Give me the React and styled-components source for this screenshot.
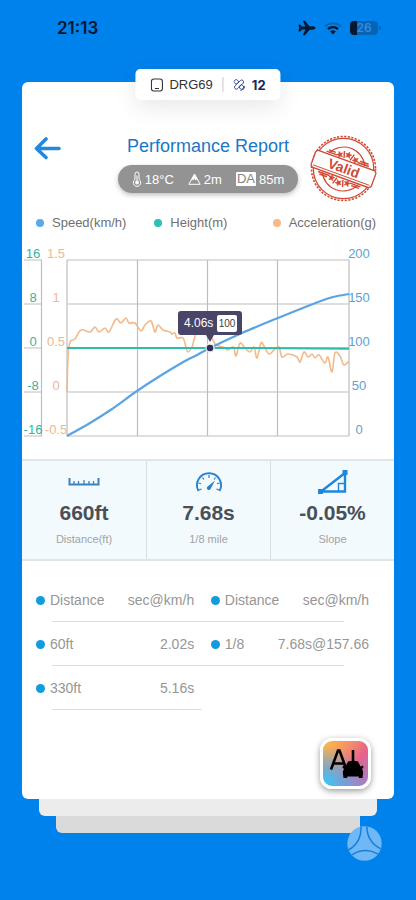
import React from 'react'
import styled, { createGlobalStyle } from 'styled-components';
import { IoAirplane } from 'react-icons/io5'

const GlobalStyle = createGlobalStyle`
    * {
        box-sizing: border-box;
    }
    body {
        margin: 0;
        background: #0082ed;
        font-family: "Liberation Sans", Arial, sans-serif;
    }
    button {
        border: 0;
        padding: 0;
        background: none;
        cursor: pointer;
    }
    svg {
        display: block;
    }
`;

const Page = styled.div`
    min-height: 100vh;
    background: #0082ed;
    padding: 0 22px;
`;

const StatusBar = styled.header`
    display: flex;
    align-items: center;
    justify-content: space-between;
    height: 56px;
    padding: 0 16px 0 35px;
    color: #06182f;
`;

const Clock = styled.time`
    font-family: Inter, sans-serif;
    font-size: 17px;
    font-weight: 600;
`;

const StatusIcons = styled.div`
    display: flex;
    align-items: center;
    gap: 8px;
`;

const Battery = styled.div`
    position: relative;
    width: 28px;
    height: 14px;
    border-radius: 4px;
    background: linear-gradient(90deg, #06182f 26%, #0764b4 26%);
    color: #2f8de0;
    font-family: Inter, sans-serif;
    font-size: 12px;
    font-weight: 600;
    line-height: 14px;
    text-align: center;

    &::after {
        content: '';
        position: absolute;
        top: 5px;
        right: -3px;
        width: 2px;
        height: 4px;
        border-radius: 0 2px 2px 0;
        background: #0764b4;
    }
`;

const Card = styled.main`
    position: relative;
    margin-top: 26px;
    padding: 53px 0 10px;
    border-radius: 6px;
    background: #fff;
`;

const CardLayer = styled.div`
    height: 17px;
    margin: 0 ${props => props.$inset}px;
    border-radius: 0 0 6px 6px;
    background: ${props => props.$color};
`;

const DeviceBadge = styled.div`
    position: absolute;
    top: -13px;
    left: 50%;
    transform: translateX(-50%);
    display: flex;
    align-items: center;
    gap: 6px;
    height: 31px;
    padding: 0 15px;
    border-radius: 5px;
    background: #fff;
    box-shadow: 0 6px 24px rgba(0, 0, 0, 0.1);
    color: #333;
    font-size: 13px;
`;

const BadgeDivider = styled.span`
    width: 1px;
    height: 15px;
    margin: 0 4px;
    background: #c8c8cc;
`;

const Satellites = styled.span`
    color: #14295c;
    font-family: Inter, sans-serif;
    font-weight: 700;
`;

const ReportHeader = styled.div`
    display: grid;
    grid-template-columns: 1fr auto 1fr;
    align-items: start;
`;

const BackButton = styled.button`
    width: 28px;
    height: 26px;
    margin-left: 12px;
`;

const Heading = styled.div`
    display: flex;
    flex-direction: column;
    align-items: center;
    gap: 8px;
`;

const Title = styled.h1`
    margin: 0;
    color: #1a78c6;
    font-size: 18px;
    font-weight: 400;
    line-height: 22px;
`;

const Conditions = styled.div`
    display: flex;
    align-items: center;
    gap: 14px;
    height: 28px;
    padding: 0 14px;
    border-radius: 14px;
    background: #939393;
    box-shadow: 0 2px 5px rgba(0, 0, 0, 0.25);
    color: #fff;
    font-size: 13px;
`;

const Condition = styled.span`
    display: flex;
    align-items: center;
    gap: 3px;
`;

const AltitudeTag = styled.span`
    border-radius: 1px;
    padding: 0 1px;
    background: #fff;
    color: #858585;
    line-height: 14px;
`;

const StampSlot = styled.div`
    justify-self: end;
    margin-right: 17px;
`;

const Legend = styled.ul`
    display: grid;
    grid-template-columns: repeat(3, 1fr);
    margin: 13px 0 9px;
    padding: 0 3px 0 14px;
    list-style: none;
`;

const LegendItem = styled.li`
    display: flex;
    align-items: center;
    gap: 8px;
    color: #707070;
    font-size: 13px;
    line-height: 16px;
    white-space: nowrap;

    &::before {
        content: '';
        width: 8px;
        height: 8px;
        border-radius: 50%;
        background: ${props => props.$color};
    }
`;

const ChartSvg = styled.svg`
    width: 100%;
    height: auto;
    font-size: 13px;
`;

const Stats = styled.section`
    display: grid;
    grid-template-columns: repeat(3, 1fr);
    margin: 13px 0 17px;
    border: solid #dfe6e9;
    border-width: 2px 0;
    background: #f3fafd;
`;

const Stat = styled.div`
    display: flex;
    flex-direction: column;
    align-items: center;
    height: 98px;
    padding-top: 9px;

    & + & {
        border-left: 1px solid #d5e0e3;
    }
`;

const StatIcon = styled.div`
    display: flex;
    align-items: center;
    height: 24px;
`;

const StatValue = styled.strong`
    margin-top: 7px;
    color: #4a4f57;
    font-size: 21px;
    line-height: 24px;
`;

const StatLabel = styled.span`
    margin-top: 7px;
    color: #a0a3a6;
    font-size: 11px;
    line-height: 14px;
`;

const Results = styled.table`
    width: calc(100% - 39px);
    margin-left: 14px;
    border-collapse: collapse;
    table-layout: fixed;
    color: #969696;
    font-size: 14px;
`;

const ResultRow = styled.tr`
    height: 44px;
    background: linear-gradient(#dcdcdc, #dcdcdc) no-repeat 16px 100% / ${props => props.$line} 1px;
`;

const NameCell = styled.td`
    width: 20%;
    padding: 0;
    font-weight: 400;
    text-align: left;
    white-space: nowrap;

    &::before {
        content: '';
        display: inline-block;
        width: 9px;
        height: 9px;
        margin-right: 5px;
        border-radius: 50%;
        background: #129bdf;
    }
`;

const ValueCell = styled.td`
    padding: 0;
    font-weight: 400;
    text-align: right;
    white-space: nowrap;
`;

const Gap = styled.td`
    width: 5%;
    padding: 0;
`;

const AiButton = styled.button`
    display: block;
    width: 51px;
    height: 51px;
    margin: 28px 23px 0 auto;
    border: 3px solid #fff;
    border-radius: 12px;
    overflow: hidden;
    background:
        radial-gradient(circle at 0 100%, #3fc3f2 8%, rgba(63, 195, 242, 0) 65%),
        radial-gradient(circle at 0 0, #fdb64a 5%, rgba(253, 182, 74, 0) 65%),
        linear-gradient(160deg, #f08a70, #e8618c 45%, #9a83cf);
    box-shadow: 0 2px 6px rgba(0, 0, 0, 0.4);
`;

const Watermark = styled.div`
    display: flex;
    justify-content: flex-end;
    margin-top: -7px;
    padding-right: 12px;
`;

const speed = [[0, 176], [23, 163], [45, 149], [70, 131], [93, 116], [118, 101], [130, 95], [143, 88], [175, 73], [211, 58], [246, 44], [266, 37], [282, 34]]

const acceleration = [
    [0, 132], [1, 98], [3, 82], [8, 79], [14, 70], [23, 72], [28, 67], [32, 72], [38, 68], [42, 72], [49, 59], [54, 63],
    [59, 58], [62, 63], [68, 63], [74, 71], [78, 65], [84, 61], [88, 72], [91, 65], [96, 70], [103, 72], [105, 74],
    [108, 73], [110, 78], [116, 78], [119, 87], [121, 92], [125, 87], [127, 80], [130, 72], [136, 72], [143, 76],
    [146, 80], [149, 85], [156, 87], [161, 90], [165, 87], [167, 88], [169, 96], [173, 83], [178, 88], [183, 92],
    [187, 87], [190, 98], [194, 83], [197, 86], [202, 94], [208, 89], [212, 87], [215, 97], [221, 94], [230, 97],
    [233, 102], [237, 92], [241, 97], [245, 94], [248, 98], [252, 95], [258, 103], [261, 97], [265, 112], [268, 93],
    [273, 96], [277, 105], [282, 101],
]

// Catmull-Rom through every point
const smooth = (points) => points.reduce((d, p, i) => {
    if (i === 0) return `M${p[0]} ${p[1]}`
    const p0 = points[i - 2] || points[i - 1]
    const p1 = points[i - 1]
    const p3 = points[i + 1] || p
    return `${d}C${p1[0] + (p[0] - p0[0]) / 6} ${p1[1] + (p[1] - p0[1]) / 6} ${p[0] - (p3[0] - p1[0]) / 6} ${p[1] - (p3[1] - p1[1]) / 6} ${p[0]} ${p[1]}`
}, '')

const axisRows = [
    { y: 0, height: '16', accel: '1.5', speed: '200' },
    { y: 44, height: '8', accel: '1', speed: '150' },
    { y: 88, height: '0', accel: '0.5', speed: '100' },
    { y: 132, height: '-8', accel: '0', speed: '50' },
    { y: 176, height: '-16', accel: '-0.5', speed: '0' },
]

const Chart = () => (
    <ChartSvg viewBox="0 0 372 206" role="img" aria-label="Performance chart">
        <g transform="translate(45 20)" fill="none">
            <g stroke="#bdbdbd" strokeWidth="1.2">
                {axisRows.map(row => <path key={row.y} d={`M0 ${row.y}H282M-43 ${row.y}H-25`} />)}
                {[0, 70.5, 140.5, 210.5, 282].map(x => <path key={x} d={`M${x} 0V176`} />)}
                <path d="M-25.5 0V176" />
            </g>
            <g textAnchor="middle">
                {axisRows.map(row => (
                    <React.Fragment key={row.y}>
                        <text x="-34" y={row.y - 2} fill="#30b5a5">{row.height}</text>
                        <text x="-11" y={row.y - 2} fill="#edb98e">{row.accel}</text>
                        <text x="292" y={row.y - 2} fill="#62a0d0">{row.speed}</text>
                    </React.Fragment>
                ))}
            </g>
            <path d={smooth(acceleration)} stroke="#f3b98a" strokeWidth="1.6" strokeLinejoin="round" />
            <path d="M0 88H190L282 88.6" stroke="#2dbcae" strokeWidth="2.2" />
            <path d={smooth(speed)} stroke="#5aa4e3" strokeWidth="2.2" />
            <circle cx="143" cy="88" r="4" fill="#322d55" stroke="#e8eef5" strokeWidth="1.4" />
            <path d="M114 51h58q3 0 3 3v18q0 3-3 3h-25l-4 7-4-7h-25q-3 0-3-3V54q0-3 3-3z" fill="#484568" />
            <text x="117" y="67" fill="#fff" fontSize="12">4.06s</text>
            <rect x="150" y="55" width="20" height="17" rx="2" fill="#fff" />
            <text x="160" y="67" fill="#444" fontSize="10" textAnchor="middle">100</text>
        </g>
    </ChartSvg>
)

const WifiIcon = () => (
    <svg width="18" height="14" viewBox="0 0 18 14" fill="none">
        <path d="M1 5.5a11.5 11.5 0 0 1 16 0" stroke="#0768bd" strokeWidth="2.2" />
        <path d="M4 8.2a7 7 0 0 1 10 0" stroke="#06182f" strokeWidth="2.4" />
        <path d="M9 13.5L6.2 10.6a4 4 0 0 1 5.6 0z" fill="#06182f" />
    </svg>
)

const DeviceIcon = () => (
    <svg width="13" height="14" viewBox="0 0 13 14" fill="none" stroke="#333" strokeWidth="1.1">
        <rect x="1" y="1" width="11" height="12" rx="2.5" />
        <path d="M4.5 10.5h4" />
    </svg>
)

const SatelliteIcon = () => (
    <svg width="12" height="12" viewBox="0 0 12 12" fill="none" stroke="#2b4384" strokeWidth=".9">
        <rect x="-2" y="-2" width="4" height="4" rx="1.4" transform="translate(2.8 2.8) rotate(-45)" />
        <rect x="-2" y="-2" width="4" height="4" rx="1.4" transform="translate(8 8) rotate(-45)" />
        <rect x="-1.9" y="-5.6" width="3.8" height="11.2" rx="1.8" transform="translate(5.6 5.6) rotate(45)" />
        <path d="M7 11.5a5 5 0 0 0 4.5-4.5" />
    </svg>
)

const BackIcon = () => (
    <svg width="28" height="26" viewBox="0 0 28 26" fill="none" stroke="#2488dd" strokeWidth="3.6" strokeLinecap="round" strokeLinejoin="round">
        <path d="M25 13.5H3M12 4L2.5 13.5l9.5 9" />
    </svg>
)

const ThermometerIcon = () => (
    <svg width="10" height="16" viewBox="0 0 10 16" fill="none" stroke="#fff" strokeWidth="1">
        <path d="M3 8.5V3a2 2 0 0 1 4 0v5.5a3.7 3.7 0 1 1-4 0z" />
        <path d="M5 4.5v7" />
        <circle cx="5" cy="11.5" r="1.5" fill="#fff" />
    </svg>
)

const MountainIcon = () => (
    <svg width="13" height="12" viewBox="0 0 13 12">
        <path d="M6.5 1L.8 11.3h11.4z" fill="none" stroke="#fff" strokeWidth="1" />
        <path d="M6.5 1L3.8 6l1.4 1.5 1.3-2 1.3 2L9.2 6z" fill="#fff" />
    </svg>
)

const ringStar = 'M0-3.2L.9-1 3.2-.8 1.4.7 2 3 0 1.700-2 3-1.400.7-3.200-.8-.9-1z'

const ValidStamp = () => (
    <svg width="67" height="67" viewBox="0 0 67 67" fill="none" stroke="#cf4b35">
        <circle cx="33.5" cy="33.5" r="32" strokeWidth="1.6" strokeDasharray="2.2 1.4" />
        <circle cx="33.5" cy="33.5" r="30.2" strokeWidth="1.3" />
        <g transform="translate(33.5 34) rotate(20)">
            <path d="M-19-10a21 21 0 0 1 38 0M-19 10a21 21 0 0 0 38 0" strokeWidth="1.2" />
            <path d="M-22-11h11M-20-13h7M11-11h12M13-13h9M-23 11h12M-21 13h8M11 11h11M13 13h8" strokeWidth="1.5" />
            {[-34, 0, 34, 146, 180, 214].map(angle => (
                <path key={angle} d={ringStar} transform={`rotate(${angle}) translate(0 -15)`} fill="#cf4b35" strokeWidth=".5" />
            ))}
            {[-17, 17, 163, 197].map(angle => (
                <path key={angle} d="M0-18v7" transform={`rotate(${angle})`} strokeWidth="1.4" />
            ))}
            <path d="M-30-9H30l2 2v14l-2 2h-60l-2-2v-14z" fill="#fff" strokeWidth="1.3" />
            <path d="M-30 6.500H30" strokeWidth=".9" />
            <text y="4" fill="#cf4b35" stroke="none" fontSize="14" fontWeight="700" textAnchor="middle">Valid</text>
        </g>
    </svg>
)

const RulerIcon = () => (
    <svg width="32" height="8" viewBox="0 0 32 8" fill="none" stroke="#3b82bd">
        <path d="M1.5 0v6.5h29V0" strokeWidth="2" />
        <path d="M6 3v3M10.500 3v3M16 2v4M21 3v3M25.500 3v3" strokeWidth="1.3" />
    </svg>
)

const GaugeIcon = () => (
    <svg width="28" height="22" viewBox="0 0 28 22" fill="none" stroke="#2a80c9">
        <path d="M3.500 20a12 12 0 1 1 21 0" strokeWidth="1.9" />
        <path d="M14 4v3M7.500 6.500l1.500 2M20.500 6.500l-1.500 2M3.500 12l2.500.8M24.500 12l-2.500.8M3.500 19l3-.8M24.500 19l-3-.8" strokeWidth="1.2" />
        <path d="M20 9.500l-4.300 8.300a2 2 0 1 1-2.700-2.600z" fill="#2a80c9" stroke="none" />
    </svg>
)

const SlopeIcon = () => (
    <svg width="30" height="24" viewBox="0 0 30 24" fill="none" stroke="#1f86dc">
        <path d="M3 21.500L27 3v18.500z" strokeWidth="2.4" />
        <path d="M20.500 21v-7.500H27" strokeWidth="1.4" />
        <path d="M0 19h5v5H0zM24.500 0h5v5h-5z" fill="#1f86dc" stroke="none" />
    </svg>
)

const AiIcon = () => (
    <svg width="45" height="45" viewBox="0 0 45 45" fill="none" stroke="#000" strokeWidth="2.6">
        <path d="M8 28.500L15 9.500h1.500L23.500 28.500M10.500 22.500h10M30 9v12" />
        <path d="M25 20.500q5-1.500 10 0l2.500 5 2.500-1 .5 2-1.500 1.500q1.500 2 1 5l-.5 4h-3.500l-.5-1.500h-11l-.5 1.500h-3.500l-.5-4q-.5-3 1-5l-1.500-1.500.5-2 2.500 1z" fill="#000" stroke="none" />
    </svg>
)

const WatermarkIcon = () => (
    <svg width="35" height="35" viewBox="0 0 35 35" fill="none">
        <circle cx="17.5" cy="17.5" r="17.2" fill="#70b8f5" />
        {[0, 120, 240].map(angle => (
            <path key={angle} d="M14 1Q14.500 16.500 1.500 24" stroke="#147fdb" strokeWidth="1.5" transform={`rotate(${angle} 17.5 17.5)`} />
        ))}
    </svg>
)

const legendItems = [
    { name: 'Speed(km/h)', color: '#5aa8ea' },
    { name: 'Height(m)', color: '#2dc0b4' },
    { name: 'Acceleration(g)', color: '#f5b98a' },
]

const stats = [
    { icon: <RulerIcon />, value: '660ft', label: 'Distance(ft)' },
    { icon: <GaugeIcon />, value: '7.68s', label: '1/8 mile' },
    { icon: <SlopeIcon />, value: '-0.05%', label: 'Slope' },
]

const App = () => (
    <>
        <GlobalStyle />
        <Page>
            <StatusBar>
                <Clock>21:13</Clock>
                <StatusIcons>
                    <IoAirplane size={18} />
                    <WifiIcon />
                    <Battery>26</Battery>
                </StatusIcons>
            </StatusBar>
            <Card>
                <DeviceBadge>
                    <DeviceIcon />
                    <span>DRG69</span>
                    <BadgeDivider />
                    <SatelliteIcon />
                    <Satellites>12</Satellites>
                </DeviceBadge>
                <ReportHeader>
                    <BackButton aria-label="Back"><BackIcon /></BackButton>
                    <Heading>
                        <Title>Performance Report</Title>
                        <Conditions>
                            <Condition><ThermometerIcon />18°C</Condition>
                            <Condition><MountainIcon />2m</Condition>
                            <Condition><AltitudeTag>DA</AltitudeTag>85m</Condition>
                        </Conditions>
                    </Heading>
                    <StampSlot><ValidStamp /></StampSlot>
                </ReportHeader>
                <Legend>
                    {legendItems.map(item => (
                        <LegendItem key={item.name} $color={item.color}>{item.name}</LegendItem>
                    ))}
                </Legend>
                <Chart />
                <Stats>
                    {stats.map(stat => (
                        <Stat key={stat.label}>
                            <StatIcon>{stat.icon}</StatIcon>
                            <StatValue>{stat.value}</StatValue>
                            <StatLabel>{stat.label}</StatLabel>
                        </Stat>
                    ))}
                </Stats>
                <Results>
                    <thead>
                        <ResultRow $line="calc(100% - 41px)">
                            <NameCell as="th">Distance</NameCell>
                            <ValueCell as="th">sec@km/h</ValueCell>
                            <Gap />
                            <NameCell as="th">Distance</NameCell>
                            <ValueCell as="th">sec@km/h</ValueCell>
                        </ResultRow>
                    </thead>
                    <tbody>
                        <ResultRow $line="calc(100% - 41px)">
                            <NameCell>60ft</NameCell>
                            <ValueCell>2.02s</ValueCell>
                            <Gap />
                            <NameCell>1/8</NameCell>
                            <ValueCell>7.68s@157.66</ValueCell>
                        </ResultRow>
                        <ResultRow $line="45%">
                            <NameCell>330ft</NameCell>
                            <ValueCell>5.16s</ValueCell>
                            <Gap colSpan={3} />
                        </ResultRow>
                    </tbody>
                </Results>
                <AiButton aria-label="AI analysis"><AiIcon /></AiButton>
            </Card>
            <CardLayer $inset={17} $color="#ececec" />
            <CardLayer $inset={34} $color="#dadada" />
            <Watermark><WatermarkIcon /></Watermark>
        </Page>
    </>
)

export default App
